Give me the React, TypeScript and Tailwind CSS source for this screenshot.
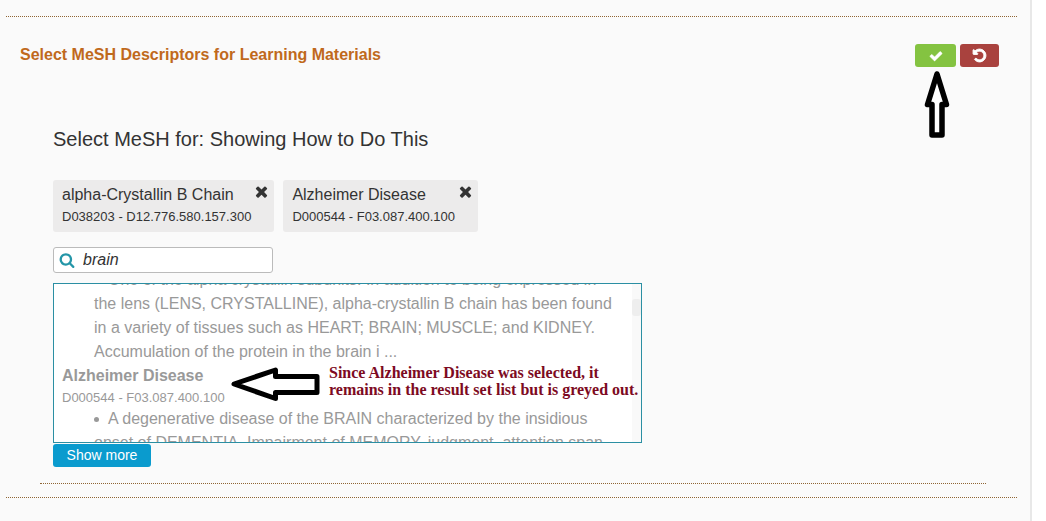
import type { ReactNode } from 'react';

const ICONS = {
  check:
    'M1671 566q0 40-28 68l-724 724-136 136q-28 28-68 28t-68-28l-136-136-362-362q-28-28-28-68t28-68l136-136q28-28 68-28t68 28l294 295 656-657q28-28 68-28t68 28l136 136q28 28 28 68z',
  undo:
    'M1664 896q0 156-61 298t-164 245-245 164-298 61q-172 0-327-72.5t-264-204.5q-7-10-6.5-22.5t8.5-20.5l137-138q10-9 25-9 16 2 23 12 73 95 179 147t225 52q104 0 198.5-40.5t163.5-109.5 109.5-163.5 40.5-198.5-40.5-198.5-109.5-163.5-163.5-109.5-198.5-40.5q-98 0-188 35.5t-160 101.5l137 138q31 30 14 69-17 40-59 40h-448q-26 0-45-19t-19-45v-448q0-42 40-59 39-17 69 14l130 129q107-101 244.5-156.5t284.5-55.5q156 0 298 61t245 164 164 245 61 298z',
  times:
    'M1490 1322q0 40-28 68l-136 136q-28 28-68 28t-68-28l-294-294-294 294q-28 28-68 28t-68-28l-136-136q-28-28-28-68t28-68l294-294-294-294q-28-28-28-68t28-68l136-136q28-28 68-28t68 28l294 294 294-294q28-28 68-28t68 28l136 136q28 28 28 68t-28 68l-294 294 294 294q28 28 28 68z',
  search:
    'M1216 832q0-185-131.5-316.5t-316.5-131.5-316.5 131.5-131.5 316.5 131.5 316.5 316.5 131.5 316.5-131.5 131.5-316.5zm512 832q0 52-38 90t-90 38q-54 0-90-38l-343-342q-179 124-399 124-143 0-273.5-55.5t-225-150-150-225-55.5-273.5 55.5-273.5 150-225 225-150 273.5-55.5 273.5 55.5 225 150 150 225 55.5 273.5q0 220-124 399l343 343q37 37 37 90z',
};

function Icon({ name, className }: { name: keyof typeof ICONS; className: string }) {
  return (
    <svg
      viewBox="0 0 1792 1792"
      fill="currentColor"
      stroke="currentColor"
      aria-hidden="true"
      className={className}
    >
      <path d={ICONS[name]} />
    </svg>
  );
}

function Chip({ name, code }: { name: string; code: string }) {
  return (
    <li className="flex h-[52px] items-start rounded-[3px] bg-[#ecebeb] pt-[3px] pr-1 pl-[9px] text-[#333]">
      <div className="grid pt-px">
        <span className="text-base leading-[22px]">{name}</span>
        <span className="text-[13px] leading-[22px]">{code}</span>
      </div>
      <button type="button" aria-label={`Remove ${name}`} className="pl-0.5">
        <Icon name="times" className="size-[17px] stroke-0" />
      </button>
    </li>
  );
}

function Description({ children }: { children: ReactNode }) {
  return (
    <ul className="pr-3 pl-8">
      <li className="text-base leading-6">
        <span className="mr-[9px] inline-block size-[5px] rounded-full bg-[#999] align-middle" />
        {children}
      </li>
    </ul>
  );
}

export default function App() {
  return (
    <div className="min-h-screen bg-white pr-[14px] font-['Liberation_Sans',Arial,sans-serif]">
      <main className="min-h-screen border-r-2 border-[#e8e8e8] bg-[#fafafa] pt-4 pr-[13px] pl-1.5">
        <section className="border-y border-dotted border-[#8f6534] pb-[13px]">
          <header className="flex items-start justify-between pt-[27px] pr-[18px] pl-3.5">
            <h2 className="text-base leading-[22px] font-bold text-[#c0691c]">
              Select MeSH Descriptors for Learning Materials
            </h2>
            <div className="flex gap-1">
              <div className="relative">
                <button
                  type="button"
                  aria-label="Save"
                  className="flex h-[23px] w-[41px] items-center justify-center rounded-[3px] bg-[#84c341] text-white"
                >
                  <Icon name="check" className="size-[14px] stroke-[60]" />
                </button>
                <svg
                  viewBox="0 0 26 68"
                  fill="#fff"
                  stroke="#000"
                  strokeWidth="5.5"
                  strokeLinejoin="round"
                  aria-hidden="true"
                  className="absolute top-[26px] left-[9px] h-[68px] w-[26px]"
                >
                  <path d="M13 4 L3.500 34.500 L8 34.500 L8 65 L18 65 L18 34.500 L22.500 34.500 Z" />
                </svg>
              </div>
              <button
                type="button"
                aria-label="Undo"
                className="flex h-[23px] w-[39px] items-center justify-center rounded-[3px] bg-[#a9423e] text-white"
              >
                <Icon name="undo" className="size-[15px] stroke-[110]" />
              </button>
            </div>
          </header>

          <div className="mr-[31px] ml-[34px] border-b border-dotted border-[#8f6534] pt-[60px] pb-4 pl-[13px]">
            <h3 className="text-xl leading-6 text-[#333]">
              Select MeSH for: Showing How to Do This
            </h3>

            <ul className="mt-[29px] flex flex-wrap gap-[9px]">
              <Chip name="alpha-Crystallin B Chain" code="D038203 - D12.776.580.157.300" />
              <Chip name="Alzheimer Disease" code="D000544 - F03.087.400.100" />
            </ul>

            <label className="mt-[15px] flex h-[26px] w-[220px] items-center gap-2 rounded-[3px] border border-[#bbb] bg-white pl-[5px]">
              <Icon name="search" className="size-4 shrink-0 stroke-0 text-[#2496a8]" />
              <input
                type="text"
                aria-label="Search MeSH"
                defaultValue="brain"
                className="w-full min-w-0 bg-transparent text-base leading-5 text-[#333] italic outline-none"
              />
            </label>

            <div className="relative mt-2.5 flex h-40 max-w-[589px] border border-[#2b8fa3] bg-white">
              <div className="min-w-0 flex-1 overflow-hidden pl-2 text-[#999]">
                <div className="-mt-4">
                  <Description>
                    One of the alpha crystallin subunits. In addition to being expressed in the
                    lens (LENS, CRYSTALLINE), alpha-crystallin B chain has been found in a variety
                    of tissues such as HEART; BRAIN; MUSCLE; and KIDNEY. Accumulation of the
                    protein in the brain i ...
                  </Description>
                  <h4 className="text-base leading-6 font-bold">Alzheimer Disease</h4>
                  <p className="text-[13px] leading-[19px]">D000544 - F03.087.400.100</p>
                  <Description>
                    A degenerative disease of the BRAIN characterized by the insidious onset of
                    DEMENTIA. Impairment of MEMORY, judgment, attention span
                  </Description>
                </div>
              </div>
              <div className="w-[9px] bg-[#f9f9f9] pt-[15px]">
                <div className="h-[17px] rounded-[3px] bg-[#eee]" />
              </div>
              <svg
                viewBox="0 0 90 36"
                fill="#fff"
                stroke="#000"
                strokeWidth="5"
                strokeLinejoin="round"
                aria-hidden="true"
                className="absolute top-[82px] left-[176px] h-9 w-[90px]"
              >
                <path d="M4 18 L45.500 4 L45.500 10.500 L87 10.500 L87 26.500 L45.500 26.500 L45.500 32.500 Z" />
              </svg>
              <p className="absolute top-[80px] left-[275px] font-['Liberation_Serif',serif] text-base leading-[17px] font-bold whitespace-nowrap text-[#7d0a22]">
                Since Alzheimer Disease was selected, it
                <br />
                remains in the result set list but is greyed out.
              </p>
            </div>

            <button
              type="button"
              className="mt-px flex h-[23px] w-[98px] items-center justify-center rounded-[3px] bg-[#0a9bce] pb-0.5 text-sm text-white"
            >
              Show more
            </button>
          </div>
        </section>
      </main>
    </div>
  );
}
